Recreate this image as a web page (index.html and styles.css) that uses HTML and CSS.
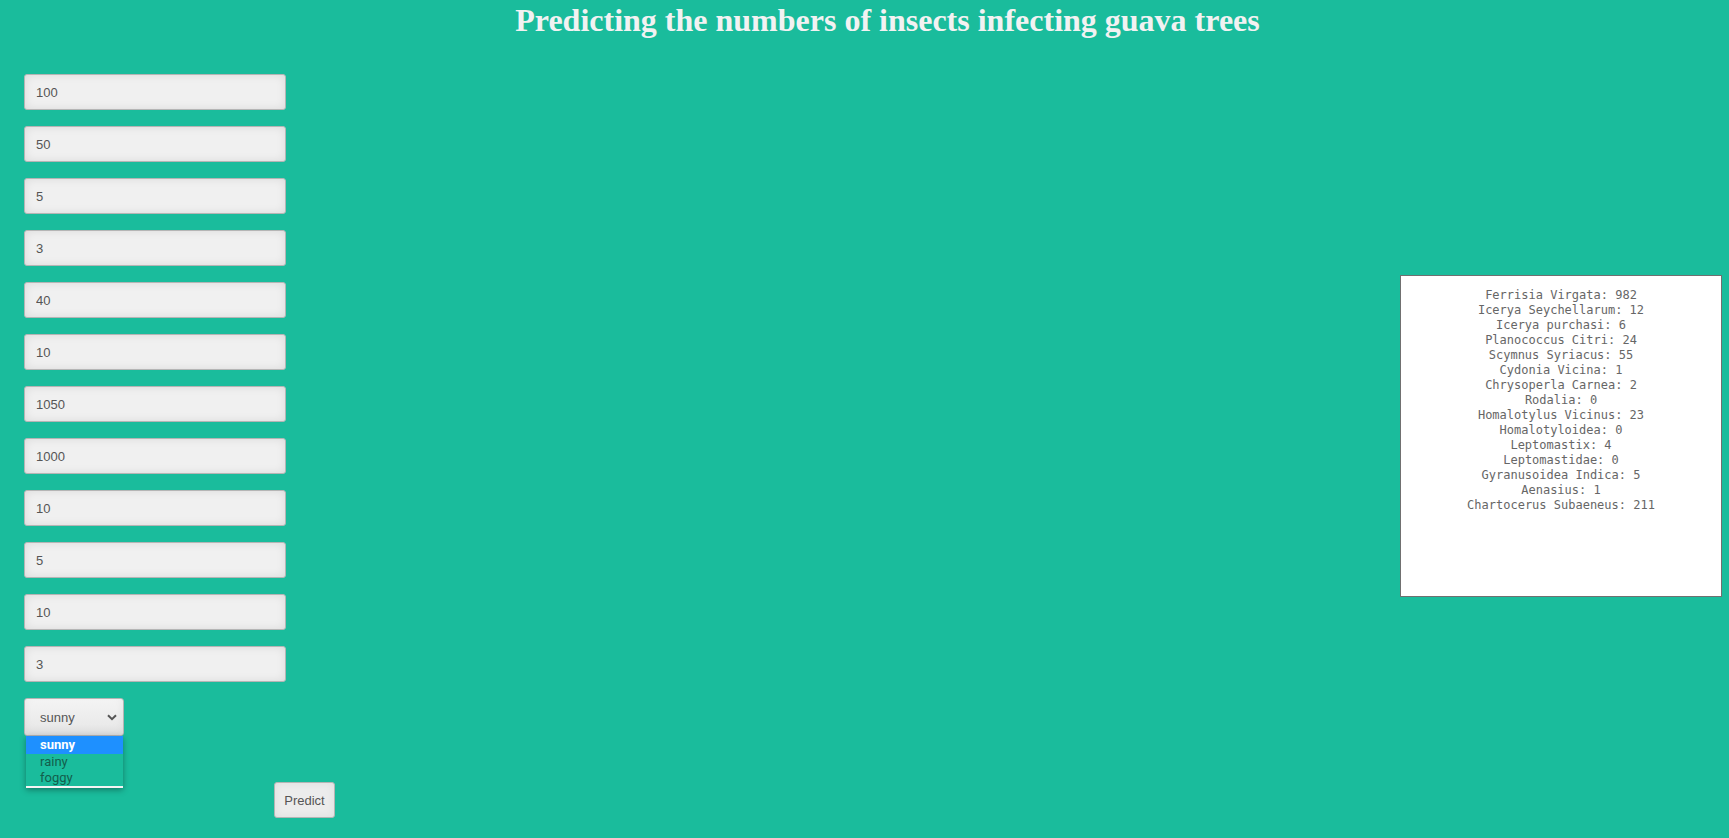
FILE: index.html
```html
<!DOCTYPE html>
<html lang="en">
<head>
  <meta charset="UTF-8">
  <title>Guava insects prediction</title>
  <link rel="stylesheet" href="styles.css">
</head>
<body>
<h1 class="title">Predicting the numbers of insects infecting guava trees</h1>
<div class="page">
  <form class="inputs" onsubmit="return false">
    <input class="field" type="text" value="100" aria-label="Feature 1">
    <input class="field" type="text" value="50" aria-label="Feature 2">
    <input class="field" type="text" value="5" aria-label="Feature 3">
    <input class="field" type="text" value="3" aria-label="Feature 4">
    <input class="field" type="text" value="40" aria-label="Feature 5">
    <input class="field" type="text" value="10" aria-label="Feature 6">
    <input class="field" type="text" value="1050" aria-label="Feature 7">
    <input class="field" type="text" value="1000" aria-label="Feature 8">
    <input class="field" type="text" value="10" aria-label="Feature 9">
    <input class="field" type="text" value="5" aria-label="Feature 10">
    <input class="field" type="text" value="10" aria-label="Feature 11">
    <input class="field" type="text" value="3" aria-label="Feature 12">
    <div class="weather">
      <div class="select">
        <span>sunny</span>
        <svg class="chev" width="10" height="7" viewBox="0 0 10 7"><path d="M1 1.2 5 5.2 9 1.2" fill="none" stroke="#555" stroke-width="2"/></svg>
      </div>
      <ul class="options">
        <li class="opt on">sunny</li>
        <li class="opt">rainy</li>
        <li class="opt">foggy</li>
      </ul>
    </div>
    <button class="btn" type="submit">Predict</button>
  </form>
  <pre class="result">Ferrisia Virgata: 982
Icerya Seychellarum: 12
Icerya purchasi: 6
Planococcus Citri: 24
Scymnus Syriacus: 55
Cydonia Vicina: 1
Chrysoperla Carnea: 2
Rodalia: 0
Homalotylus Vicinus: 23
Homalotyloidea: 0
Leptomastix: 4
Leptomastidae: 0
Gyranusoidea Indica: 5
Aenasius: 1
Chartocerus Subaeneus: 211</pre>
</div>
</body>
</html>
```

FILE: styles.css
```css
html,body{margin:0;padding:0;}
body{background:#1abc9c;font-family:"Liberation Sans",Arial,sans-serif;height:838px;overflow:hidden;}
.title{margin:2px 0 0;padding-left:46px;text-align:center;font-family:"Liberation Serif","Times New Roman",serif;font-weight:bold;font-size:32px;color:#f2f2f2;}
.page{display:flex;justify-content:space-between;align-items:flex-start;padding:0 7px 0 24px;margin-top:35px;}
.inputs{display:flex;flex-direction:column;align-items:flex-start;gap:16px;}
.field{box-sizing:border-box;width:262px;height:36px;margin:0;padding:0 11px;border:1px solid #b5b5b5;border-radius:3px;background:#f0f0f0;box-shadow:inset 0 0 10px rgba(0,0,0,.09);font:13px "Liberation Sans",Arial,sans-serif;color:#555;}
.weather{position:relative;}
.select{box-sizing:border-box;width:100px;height:38px;display:flex;align-items:center;justify-content:space-between;padding:0 6px 0 15px;border:1px solid #b5b5b5;border-radius:3px;background:linear-gradient(#f4f4f4,#e6e6e6);box-shadow:inset 0 -4px 8px rgba(0,0,0,.06);font-size:13px;color:#555;}
.options{position:absolute;left:2px;top:38px;width:97px;margin:0;padding:0;list-style:none;background:#1abc9c;border-bottom:2px solid #f4f4f4;box-shadow:0 2px 6px rgba(0,0,0,.35);font:13px Roboto,"Liberation Sans",sans-serif;}
.opt{height:16px;line-height:16px;padding-left:14px;color:#135e4c;}
.opt:first-child{height:18px;line-height:18px;}
.opt.on{background:#1e90ff;color:#fff;font-weight:bold;}
.btn{margin:30px 0 0 250px;width:61px;height:36px;padding:0;border:1px solid #b5b5b5;border-radius:3px;background:#ececec;box-shadow:inset 0 0 8px rgba(0,0,0,.06);font:13px "Liberation Sans",Arial,sans-serif;color:#555;}
.result{box-sizing:border-box;width:322px;height:322px;margin:201px 0 0;padding:12px 0 0;background:#fff;border:1px solid #707070;text-align:center;font:12px/15px "DejaVu Sans Mono",monospace;color:#666;}
```
